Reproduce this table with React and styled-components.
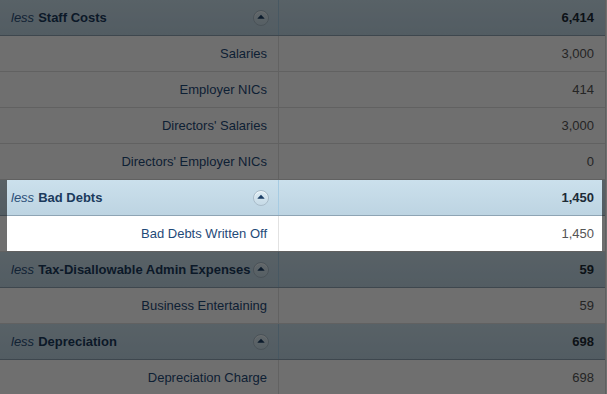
import styled, { createGlobalStyle } from "styled-components";

const GlobalStyle = createGlobalStyle`
  html, body {
    margin: 0;
    padding: 0;
    background: #ffffff;
    overflow: hidden;
  }
  body {
    font-family: "Liberation Sans", Arial, Helvetica, sans-serif;
    font-size: 13px;
  }
`;

const secciones = [
  {
    titulo: "Staff Costs",
    total: "6,414",
    items: [
      ["Salaries", "3,000"],
      ["Employer NICs", "414"],
      ["Directors' Salaries", "3,000"],
      ["Directors' Employer NICs", "0"],
    ],
  },
  {
    titulo: "Bad Debts",
    total: "1,450",
    destacado: true,
    items: [["Bad Debts Written Off", "1,450"]],
  },
  {
    titulo: "Tax-Disallowable Admin Expenses",
    total: "59",
    items: [["Business Entertaining", "59"]],
  },
  {
    titulo: "Depreciation",
    total: "698",
    items: [["Depreciation Charge", "698"]],
  },
];

function IconoColapsar() {
  return (
    <Circulo>
      <svg width="8" height="6" viewBox="0 0 8 6">
        <path d="M4 0.8 L7.4 4.2 Q7.6 4.8 7 4.8 L1 4.8 Q0.4 4.8 0.6 4.2 Z" fill="#1d3f66" />
      </svg>
    </Circulo>
  );
}

export default function App() {
  return (
    <>
      <GlobalStyle />
      <Tabla>
        {secciones.map((s) => (
          <Grupo key={s.titulo} $destacado={s.destacado}>
            <FilaCabecera>
              <CeldaNombre>
                <Menos>less</Menos>
                <Titulo>{s.titulo}</Titulo>
                <IconoColapsar />
              </CeldaNombre>
              <CeldaTotal>{s.total}</CeldaTotal>
            </FilaCabecera>
            {s.items.map(([nombre, valor]) => (
              <Fila key={nombre}>
                <CeldaEtiqueta>{nombre}</CeldaEtiqueta>
                <CeldaValor>{valor}</CeldaValor>
              </Fila>
            ))}
            {s.destacado && <Foco />}
          </Grupo>
        ))}
      </Tabla>
    </>
  );
}

const Tabla = styled.div`
  width: 605px;
  border-right: 1px solid #dcdcdc;
  background: #ffffff;
`;

const Grupo = styled.section`
  position: ${({ $destacado }) => ($destacado ? "relative" : "static")};
  z-index: ${({ $destacado }) => ($destacado ? 5 : "auto")};
`;

const FilaBase = styled.div`
  display: grid;
  grid-template-columns: 279px 1fr;
  height: 36px;
  box-sizing: border-box;
`;

const FilaCabecera = styled(FilaBase)`
  background: linear-gradient(#cbe0ec, #bdd4e2);
  border-bottom: 1px solid #8ea4b4;
  color: #1b3a5c;
`;

const Fila = styled(FilaBase)`
  background: #ffffff;
  border-bottom: 1px solid #dedede;
`;

const CeldaNombre = styled.div`
  display: flex;
  align-items: center;
  padding: 0 9px 0 11px;
  border-right: 1px solid #a6cbe2;
  white-space: nowrap;
`;

const Menos = styled.span`
  font-style: italic;
  color: #2b4f78;
  margin-right: 4px;
`;

const Titulo = styled.span`
  font-weight: bold;
`;

const Circulo = styled.span`
  margin-left: auto;
  width: 16px;
  height: 16px;
  border-radius: 50%;
  box-sizing: border-box;
  border: 1px solid #a9bcc9;
  background: linear-gradient(#dcebf3, #c6dae6);
  box-shadow: inset 0 1px 1px rgba(255, 255, 255, 0.7);
  display: flex;
  align-items: center;
  justify-content: center;
  padding-bottom: 1px;
`;

const CeldaTotal = styled.div`
  display: flex;
  align-items: center;
  justify-content: flex-end;
  padding-right: 11px;
  font-weight: bold;
  color: #1c2a36;
`;

const CeldaEtiqueta = styled.div`
  display: flex;
  align-items: center;
  justify-content: flex-end;
  padding-right: 11px;
  border-right: 1px solid #e2e2e2;
  color: #1f4a78;
`;

const CeldaValor = styled.div`
  display: flex;
  align-items: center;
  justify-content: flex-end;
  padding-right: 11px;
  color: #555555;
`;

/* capa oscura alrededor del grupo resaltado */
const Foco = styled.div`
  position: absolute;
  top: 0;
  bottom: 1px;
  left: 7px;
  right: 3px;
  pointer-events: none;
  box-shadow: 0 0 0 2000px rgba(0, 0, 0, 0.565);
`;
